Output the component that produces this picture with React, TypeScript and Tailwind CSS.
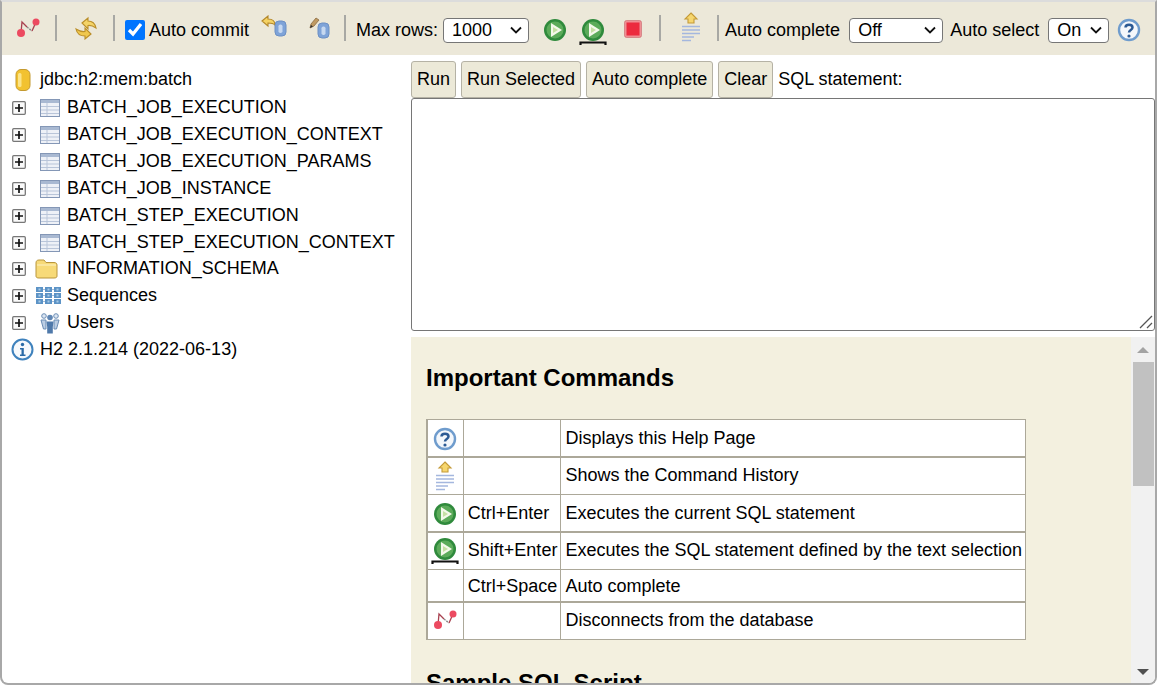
import type { ReactNode } from 'react';

function Disconnect() {
    return (
        <svg width="24" height="24" viewBox="0 0 24 24" fill="none">
            <path d="M5 16 L6 5 L11 10" stroke="#a8404f" strokeWidth="1.300" />
            <path d="M11 10 L16 14" stroke="#8a8a8a" strokeWidth="1.300" strokeDasharray="2 1" />
            <path d="M16 14 L20 5" stroke="#a8404f" strokeWidth="1.300" />
            <circle cx="5" cy="16" r="4" fill="#ec4a60" />
            <circle cx="20" cy="5" r="3.500" fill="#ec4a60" />
        </svg>
    );
}

function Refresh() {
    return (
        <svg width="24" height="24" viewBox="0 0 24 24" fill="none">
            <path d="M8 7 L14 2 L14 5 C18 5 21 7 22 12 C19 10 17 9 14 9.500 L14 13 Z" fill="#f4d468" stroke="#bb8f2a" strokeWidth="1.100" />
            <path d="M17 18 L11 23 L11 20 C7 20 3 18 2 13 C5 15 7 16 11 15.500 L11 12 Z" fill="#f0c84e" stroke="#bb8f2a" strokeWidth="1.100" />
        </svg>
    );
}

function Cylinder({ x = 12 }: { x?: number }) {
    return (
        <>
            <rect x={x} y="6" width="11" height="15" rx="4" fill="#7ea3d8" stroke="#6d90c4" strokeWidth="1" />
            <rect x={x + 3.500} y="9.500" width="4" height="8.500" rx="1.800" fill="#c6d8f0" />
        </>
    );
}

function Rollback() {
    return (
        <svg width="28" height="24" viewBox="0 0 28 24" fill="none">
            <path d="M2 6 L8 1 L8 4 C12 4 15 6 15 10 C13 8 11 8 8 8 L8 11 Z" fill="#f4d264" stroke="#b4882a" strokeWidth="1.100" />
            <Cylinder x={15} />
        </svg>
    );
}

function Commit() {
    return (
        <svg width="28" height="24" viewBox="0 0 28 24" fill="none">
            <path d="M6 11 L7 7 L12 1 L15 3 L10 9 Z" fill="#c09a62" stroke="#8a6a40" strokeWidth="0.800" />
            <path d="M6 11 L7 8 L9 9.500 Z" fill="#333" />
            <Cylinder x={14} />
        </svg>
    );
}

function PlayDisc({ cx, cy }: { cx: number; cy: number }) {
    return (
        <>
            <circle cx={cx} cy={cy} r="11" fill="#2f8a3c" />
            <circle cx={cx} cy={cy} r="8.500" fill="#5cab5a" />
            <path d={`M${cx - 4} ${cy - 7} L${cx + 7} ${cy} L${cx - 4} ${cy + 7} Z`} fill="#f4f8ea" />
            <path d={`M${cx - 2} ${cy - 3} L${cx + 3} ${cy} L${cx - 2} ${cy + 3} Z`} fill="#c6e0a4" />
        </>
    );
}

function Run() {
    return (
        <svg width="24" height="24" viewBox="0 0 24 24" fill="none">
            <PlayDisc cx={12} cy={12} />
        </svg>
    );
}

function RunSelected() {
    return (
        <svg width="28" height="26" viewBox="0 0 28 26" fill="none">
            <PlayDisc cx={14} cy={11} />
            <path d="M1.500 26 L1.500 23.500 L26.500 23.500 L26.500 26" stroke="#111" strokeWidth="2.200" />
        </svg>
    );
}

function Stop() {
    return (
        <svg width="18" height="18" viewBox="0 0 18 18">
            <rect x="0.500" y="0.500" width="17" height="17" rx="2" fill="#ef8f94" stroke="#c8646c" strokeWidth="0.600" />
            <rect x="2.500" y="2.500" width="13" height="13" fill="#ec2b3e" />
        </svg>
    );
}

function History() {
    return (
        <svg width="20" height="30" viewBox="0 0 20 30" fill="none">
            <path d="M10 1 L16 7 L13 7 L13 11 L7 11 L7 7 L4 7 Z" fill="#f6d66e" stroke="#c49a38" strokeWidth="1.100" />
            <path d="M1 14.500 H19 M1 18 H19 M1 21.500 H19 M1 25 H13 M1 28.500 H10" stroke="#a4b7de" strokeWidth="1.300" />
        </svg>
    );
}

function Help() {
    return (
        <svg width="24" height="24" viewBox="0 0 24 24" fill="none">
            <circle cx="12" cy="12" r="10" fill="#f4f7fb" stroke="#6f9ccd" strokeWidth="2.400" />
            <path d="M8.500 9.500 C8.500 5.800 15.500 5.800 15.500 9.500 C15.500 12 12 12 12 14.500" stroke="#2c5a94" strokeWidth="2.500" />
            <circle cx="12" cy="18" r="1.600" fill="#2c5a94" />
        </svg>
    );
}

function Database() {
    return (
        <svg width="16" height="22" viewBox="0 0 16 22">
            <rect x="1" y="0.500" width="14" height="21" rx="5" fill="#f2c230" stroke="#c49a30" />
            <rect x="3" y="4" width="3.500" height="14" rx="1.500" fill="#fbe48a" />
        </svg>
    );
}

function TableIcon() {
    return (
        <svg width="20" height="18" viewBox="0 0 20 18">
            <rect x="0.500" y="0.500" width="19" height="17" fill="#eef1f7" stroke="#8497b6" />
            <rect x="1" y="1" width="18" height="3" fill="#a9b9d2" />
            <path d="M1 7.500 H19 M1 11 H19 M1 14.500 H19 M7 4 V17" stroke="#b9c5d9" />
        </svg>
    );
}

function Folder() {
    return (
        <svg width="23" height="20" viewBox="0 0 23 20" className="mr-[7px]">
            <path d="M1 4 C1 2 2 1 4 1 L9 1 L11 3.500 L19 3.500 C21 3.500 22 4.500 22 6 L22 17 C22 18.500 21 19 19 19 L4 19 C2 19 1 18.500 1 17 Z" fill="#f7da78" stroke="#b9963c" />
            <rect x="2" y="5.500" width="19" height="1" fill="#fdf2c4" />
        </svg>
    );
}

function Sequences() {
    const cells = [0, 1, 2];
    return (
        <svg width="25" height="17" viewBox="0 0 25 17" className="mr-[2px]">
            {cells.map((r) =>
                cells.map((c) => (
                    <g key={`${r}-${c}`}>
                        <rect x={c * 9} y={r * 6} width="7" height="5" fill="#5c93c6" />
                        <rect x={c * 9 + 2.500} y={r * 6 + 1.500} width="2" height="2" fill="#a9cbe6" />
                        {c < 2 && <rect x={c * 9 + 7} y={r * 6 + 2} width="2" height="1" fill="#a4bdd8" />}
                    </g>
                )),
            )}
        </svg>
    );
}

function Users() {
    return (
        <svg width="20" height="22" viewBox="0 0 20 22" fill="none">
            <circle cx="4" cy="4" r="2.300" stroke="#6b8db5" fill="#dce6f2" />
            <circle cx="16" cy="4" r="2.300" stroke="#6b8db5" fill="#dce6f2" />
            <path d="M1 8 H6 L6 17 H3.500 Z M14 8 H19 L16.500 17 H14 Z" fill="#bccee4" stroke="#6b8db5" />
            <circle cx="10" cy="5.500" r="2.800" fill="#5f86b4" />
            <path d="M6.500 9.500 H13.500 L12.800 15 V21.500 H7.200 V15 Z" fill="#4f79aa" />
        </svg>
    );
}

function Info() {
    return (
        <svg width="23" height="23" viewBox="0 0 23 23" fill="none">
            <circle cx="11.500" cy="11.500" r="10" fill="#f6f9fc" stroke="#3f82bd" strokeWidth="2" />
            <circle cx="11.500" cy="6.500" r="1.700" fill="#2a6aa6" />
            <path d="M9 10 H12.800 V16.500 H14.500 V18 H9 V16.500 H10.500 V11.500 H9 Z" fill="#2a6aa6" />
        </svg>
    );
}

function Expander() {
    return (
        <svg width="14" height="14" viewBox="0 0 14 14" className="shrink-0">
            <rect x="0.700" y="0.700" width="12.600" height="12.600" rx="1" fill="#fafafa" stroke="#777" strokeWidth="1.300" />
            <path d="M3 7 H11 M7 3 V11" stroke="#111" strokeWidth="1.700" />
        </svg>
    );
}

function Sep() {
    return <div className="w-[2px] h-[26px] -mt-[5px] bg-[#a8a8a4] shrink-0" />;
}

function Select({ value, className }: { value: string; className: string }) {
    return (
        <div className={`relative h-[25px] shrink-0 ${className}`}>
            <select defaultValue={value} className="appearance-none w-full h-full bg-white border border-[#767676] rounded-[4px] pl-[8px]">
                <option>{value}</option>
            </select>
            <svg width="12" height="8" viewBox="0 0 12 8" fill="none" className="absolute right-[7px] top-[8px] pointer-events-none">
                <path d="M1 1.500 L6 6.500 L11 1.500" stroke="#111" strokeWidth="1.800" />
            </svg>
        </div>
    );
}

function TreeRow({ icon, label, h = 'h-[27px]' }: { icon: ReactNode; label: string; h?: string }) {
    return (
        <div className={`flex items-center ${h} pl-[10px] whitespace-nowrap`}>
            <Expander />
            <div className="w-[41px] flex justify-center pl-[6px] shrink-0">{icon}</div>
            <span>{label}</span>
        </div>
    );
}

function ActionButton({ children }: { children: ReactNode }) {
    return (
        <button className="h-[37px] px-[5px] bg-[#ece9d8] border border-[#b5b2a5] rounded-[3px] whitespace-nowrap">
            {children}
        </button>
    );
}

function CommandRow({ h, thick, icon, keys, text }: { h: string; thick?: boolean; icon?: ReactNode; keys?: string; text: string }) {
    const edge = thick ? 'border-b-2 pt-[2px]' : 'py-0';
    return (
        <tr className={h}>
            <td className={`border border-l-2 border-[#aca899] bg-white w-[37px] px-0 ${edge}`}>
                <div className="flex justify-center">{icon}</div>
            </td>
            <td className={`border border-[#aca899] bg-white w-[97px] pl-[4px] pr-[3px] whitespace-nowrap ${edge}`}>{keys}</td>
            <td className={`border border-[#aca899] bg-white pl-[4px] pr-[3px] whitespace-nowrap ${edge}`}>{text}</td>
        </tr>
    );
}

const tables = [
    'BATCH_JOB_EXECUTION',
    'BATCH_JOB_EXECUTION_CONTEXT',
    'BATCH_JOB_EXECUTION_PARAMS',
    'BATCH_JOB_INSTANCE',
    'BATCH_STEP_EXECUTION',
    'BATCH_STEP_EXECUTION_CONTEXT',
];

export default function App() {
    return (
        <div className="w-[1157px] h-[685px] flex flex-col overflow-hidden bg-white border-t-2 border-t-[#dcdcdc] border-l-2 border-r-2 border-b-2 border-[#a8a8a8] rounded-b-[8px] text-[18px] leading-[21px] text-black font-['Liberation_Sans',Arial,sans-serif]">
            {/* Toolbar */}
            <div className="h-[53px] pt-[3px] shrink-0 bg-[#ece8d9] flex items-center whitespace-nowrap">
                <div className="ml-[14px] flex -mt-[3px]"><Disconnect /></div>
                <div className="ml-[15px]"><Sep /></div>
                <div className="ml-[17px] flex -mt-[4px]"><Refresh /></div>
                <div className="ml-[15px]"><Sep /></div>
                <input type="checkbox" defaultChecked className="ml-[10px] w-5 h-5 accent-[#0075ff]" />
                <span className="ml-[4px]">Auto commit</span>
                <div className="ml-[11px] flex -mt-[6px]"><Rollback /></div>
                <div className="ml-[16px] flex -mt-[2px]"><Commit /></div>
                <div className="ml-[12px]"><Sep /></div>
                <span className="ml-[10px]">Max rows:</span>
                <Select value="1000" className="ml-[5px] w-[86px]" />
                <div className="ml-[14px] flex"><Run /></div>
                <div className="ml-[12px] flex mt-[4px]"><RunSelected /></div>
                <div className="ml-[17px] flex -mt-[3px]"><Stop /></div>
                <div className="ml-[17px]"><Sep /></div>
                <div className="ml-[20px] flex -mt-[6px]"><History /></div>
                <div className="ml-[16px]"><Sep /></div>
                <span className="ml-[6px]">Auto complete</span>
                <Select value="Off" className="ml-[9px] w-[94px]" />
                <span className="ml-[7px]">Auto select</span>
                <Select value="On" className="ml-[9px] w-[61px]" />
                <div className="ml-[8px] flex"><Help /></div>
            </div>

            <div className="flex flex-1 min-h-0">
                {/* Tree */}
                <div className="w-[409px] shrink-0 pt-[11px]">
                    <div className="flex items-center h-[28px] pb-px pl-[13px]">
                        <Database />
                        <span className="ml-[9px]">jdbc:h2:mem:batch</span>
                    </div>
                    {tables.map((t) => (
                        <TreeRow key={t} icon={<TableIcon />} label={t} />
                    ))}
                    <TreeRow h="h-[26px] pb-px" icon={<Folder />} label="INFORMATION_SCHEMA" />
                    <TreeRow icon={<Sequences />} label="Sequences" />
                    <TreeRow icon={<Users />} label="Users" />
                    <div className="flex items-center h-[27px] pl-[9px]">
                        <Info />
                        <span className="ml-[6px]">H2 2.1.214 (2022-06-13)</span>
                    </div>
                </div>

                {/* Query and help */}
                <div className="flex-1 min-w-0 flex flex-col">
                    <div className="flex items-center gap-[5px] pt-[6px] h-[43px] shrink-0 whitespace-nowrap">
                        <ActionButton>Run</ActionButton>
                        <ActionButton>Run Selected</ActionButton>
                        <ActionButton>Auto complete</ActionButton>
                        <ActionButton>Clear</ActionButton>
                        <span>SQL statement:</span>
                    </div>
                    <div className="relative h-[233px] shrink-0">
                        <textarea className="block w-full h-full resize-none bg-white border border-[#767676] rounded-[3px] outline-none" />
                        <svg width="14" height="14" viewBox="0 0 14 14" fill="none" className="absolute right-[2px] bottom-[2px] pointer-events-none">
                            <path d="M13 1 L1 13 M13 8 L8 13" stroke="#555" strokeWidth="1.300" />
                        </svg>
                    </div>
                    <div className="mt-[6px] flex-1 min-h-0 flex overflow-hidden">
                        <div className="flex-1 min-w-0 bg-[#f3f0df] pl-[15px] pt-[27px]">
                            <h1 className="text-[24px] leading-[28px] font-bold">Important Commands</h1>
                            <table className="mt-[27px] w-[600px] border-collapse">
                                <tbody>
                                    <CommandRow h="h-[37px]" thick icon={<Help />} text="Displays this Help Page" />
                                    <CommandRow h="h-[38px]" icon={<History />} text="Shows the Command History" />
                                    <CommandRow h="h-[37px]" thick icon={<Run />} keys="Ctrl+Enter" text="Executes the current SQL statement" />
                                    <CommandRow h="h-[38px]" icon={<RunSelected />} keys="Shift+Enter" text="Executes the SQL statement defined by the text selection" />
                                    <CommandRow h="h-[32px]" thick keys="Ctrl+Space" text="Auto complete" />
                                    <CommandRow h="h-[38px]" icon={<Disconnect />} text="Disconnects from the database" />
                                </tbody>
                            </table>
                            <h2 className="mt-[29px] text-[24px] leading-[28px] font-bold whitespace-nowrap">Sample SQL Script</h2>
                        </div>
                        {/* Scrollbar */}
                        <div className="w-[24px] shrink-0 bg-[#f1f1f1] flex flex-col items-center pt-[10px]">
                            <div className="w-0 h-0 border-x-[6px] border-x-transparent border-b-[6px] border-b-[#a3a3a3]" />
                            <div className="mt-[9px] w-[21px] h-[124px] bg-[#c1c1c1]" />
                            <div className="mt-auto mb-[8px] w-0 h-0 border-x-[6px] border-x-transparent border-t-[6px] border-t-[#505050]" />
                        </div>
                    </div>
                </div>
            </div>
        </div>
    );
}
